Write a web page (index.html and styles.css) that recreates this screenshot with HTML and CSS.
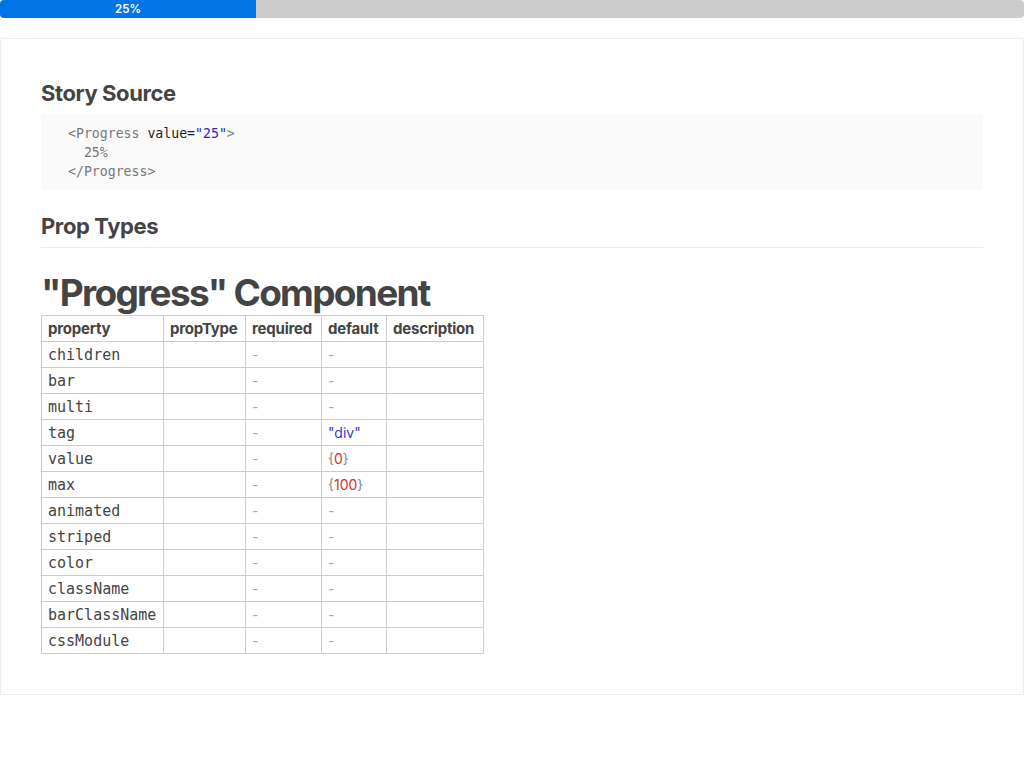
FILE: index.html
```html
<!DOCTYPE html>
<html>
<head>
<meta charset="utf-8">
<link rel="stylesheet" href="styles.css">
</head>
<body>
<div class="progress"><div class="bar" style="width:25%">25%</div></div>
<div class="card">
  <h2 class="sec-title">Story Source</h2>
  <pre class="source"><span class="tag">&lt;Progress</span> <span class="attr">value=</span><span class="str">"25"</span><span class="tag">&gt;</span>
  <span class="tag">25%</span>
<span class="tag">&lt;/Progress&gt;</span></pre>
  <h2 class="sec-title ruled">Prop Types</h2>
  <h1 class="comp-title">"Progress" Component</h1>
  <table class="props">
    <colgroup>
      <col class="c1"><col class="c2"><col class="c3"><col class="c4"><col class="c5">
    </colgroup>
    <thead>
      <tr><th>property</th><th>propType</th><th>required</th><th>default</th><th>description</th></tr>
    </thead>
    <tbody>
      <tr><td class="name">children</td><td></td><td class="dash">-</td><td class="dash">-</td><td></td></tr>
      <tr><td class="name">bar</td><td></td><td class="dash">-</td><td class="dash">-</td><td></td></tr>
      <tr><td class="name">multi</td><td></td><td class="dash">-</td><td class="dash">-</td><td></td></tr>
      <tr><td class="name">tag</td><td></td><td class="dash">-</td><td class="val"><span class="s">"div"</span></td><td></td></tr>
      <tr><td class="name">value</td><td></td><td class="dash">-</td><td class="val"><span class="b">{</span><span class="n">0</span><span class="b">}</span></td><td></td></tr>
      <tr><td class="name">max</td><td></td><td class="dash">-</td><td class="val"><span class="b">{</span><span class="n">100</span><span class="b">}</span></td><td></td></tr>
      <tr><td class="name">animated</td><td></td><td class="dash">-</td><td class="dash">-</td><td></td></tr>
      <tr><td class="name">striped</td><td></td><td class="dash">-</td><td class="dash">-</td><td></td></tr>
      <tr><td class="name">color</td><td></td><td class="dash">-</td><td class="dash">-</td><td></td></tr>
      <tr><td class="name">className</td><td></td><td class="dash">-</td><td class="dash">-</td><td></td></tr>
      <tr><td class="name">barClassName</td><td></td><td class="dash">-</td><td class="dash">-</td><td></td></tr>
      <tr><td class="name">cssModule</td><td></td><td class="dash">-</td><td class="dash">-</td><td></td></tr>
    </tbody>
  </table>
</div>
</body>
</html>
```

FILE: styles.css
```css
body {
  margin: 0;
  font-family: Inter, "Liberation Sans", sans-serif;
  color: #444;
  background: #fff;
}
.progress {
  height: 18px;
  background: #ccc;
  border-radius: 4px;
  overflow: hidden;
  display: flex;
}
.bar {
  background: #0374e6;
  color: #fff;
  font-family: Inter, sans-serif;
  font-weight: 600;
  font-size: 11.5px;
  line-height: 18px;
  text-align: center;
}
.card {
  margin-top: 20px;
  border: 1px solid #eee;
  box-shadow: 0 2px 6px rgba(0, 0, 0, 0.07);
  padding: 40px;
  height: 575px;
}
.sec-title {
  margin: 0 0 7px 0;
  font-size: 22px;
  line-height: 29px;
  font-weight: 700;
  letter-spacing: -0.4px;
  color: #444;
}
.sec-title.ruled {
  margin-top: 22px;
  margin-bottom: 0;
  padding-bottom: 6px;
  border-bottom: 1px solid #eee;
}
.source {
  margin: 0;
  background: #fafafa;
  padding: 9px 27px;
  font-family: "DejaVu Sans Mono", monospace;
  font-size: 13.2px;
  line-height: 19px;
  color: #333;
}
.source .tag { color: #777; }
.source .attr { color: #222; }
.source .str { color: #2a2ac6; }
.comp-title {
  margin: 25px 0 2px 0;
  font-size: 37px;
  line-height: 40px;
  font-weight: 700;
  letter-spacing: -1.7px;
  color: #444;
}
.props {
  border-collapse: collapse;
  table-layout: fixed;
  width: 442px;
}
.c1 { width: 122px; }
.c2 { width: 82px; }
.c3 { width: 76px; }
.c4 { width: 65px; }
.c5 { width: 97px; }
.props th, .props td {
  border: 1px solid #ccc;
  height: 25px;
  padding: 0 6px;
  text-align: left;
  white-space: nowrap;
}
.props th {
  font-size: 15px;
  font-weight: 700;
  letter-spacing: -0.2px;
  color: #444;
}
.props td.name {
  font-family: "DejaVu Sans Mono", monospace;
  font-size: 15px;
  color: #444;
}
.props td.dash {
  font-size: 14px;
  color: #aaa;
}
.props td.val { font-size: 14px; }
.val .s { color: #3b3bc8; }
.val .b { color: #888; }
.val .n { color: #c33; }
```
